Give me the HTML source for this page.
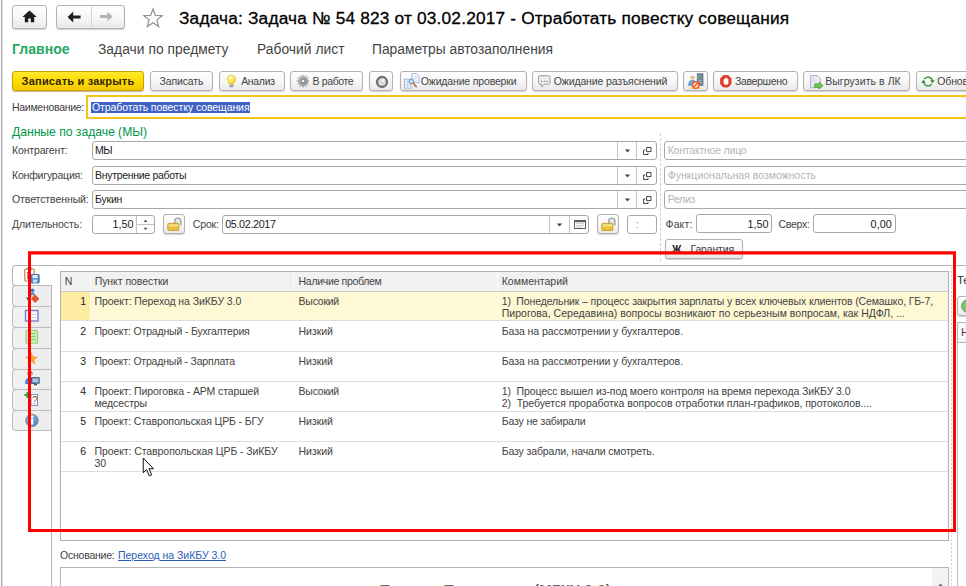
<!DOCTYPE html>
<html><head><meta charset="utf-8">
<style>
html,body{margin:0;padding:0;}
body{width:966px;height:586px;overflow:hidden;background:#fff;position:relative;font-family:"Liberation Sans",sans-serif;font-size:10.5px;line-height:13px;color:#424242;}
.a{position:absolute;white-space:nowrap;}
.t{position:absolute;white-space:pre;}
.btn{position:absolute;box-sizing:border-box;border:1px solid #b2b2b2;border-radius:3px;background:linear-gradient(#ffffff,#f6f6f6 55%,#e9e9e9);box-shadow:0 1px 1px rgba(0,0,0,0.18);}
.inp{position:absolute;box-sizing:border-box;border:1px solid #a8a8a8;border-radius:3px;background:#fff;height:19px;}
.vl{position:absolute;width:1px;background:#c4c4c4;}
.hl{position:absolute;height:1px;background:#e0e0e0;}
</style></head><body>
<div class="vl" style="left:1px;top:0px;height:586px;background:#a8a8a8;"></div>
<div class="vl" style="left:2px;top:0px;height:586px;background:#e4e4e4;"></div>
<div class="btn" style="left:12px;top:5px;width:35px;height:24px;"></div>
<svg class="a" style="left:22px;top:10px;" width="15" height="13" viewBox="0 0 15 13"><path d="M7.5 0.6 L0.3 7 H2.8 V12.2 H6.2 V8.4 H8.8 V12.2 H12.2 V7 H14.7 Z" fill="#1e1e1e"/></svg>
<div class="btn" style="left:56px;top:5px;width:69px;height:24px;"></div>
<div class="vl" style="left:91px;top:6px;height:22px;background:#d4d4d4;"></div>
<svg class="a" style="left:67px;top:11px;" width="15" height="12" viewBox="0 0 15 12"><path d="M6.2 0.6 L0.6 6 L6.2 11.4 V7.5 H13.6 V4.5 H6.2 Z" fill="#1e1e1e"/></svg>
<svg class="a" style="left:99px;top:11px;" width="15" height="11" viewBox="0 0 15 11"><path d="M8.4 0.8 L13.6 5.5 L8.4 10.2 V6.9 H1 V4.1 H8.4 Z" fill="#b4b4b4"/></svg>
<svg class="a" style="left:142px;top:7px;" width="22" height="22" viewBox="0 0 22 22"><path d="M11 2 L13.4 8.4 L20.2 8.7 L14.9 12.9 L16.7 19.5 L11 15.7 L5.3 19.5 L7.1 12.9 L1.8 8.7 L8.6 8.4 Z" fill="#fff" stroke="#909090" stroke-width="1.2"/></svg>
<div class="t" style="left:179px;top:7px;font-size:17.3px;line-height:22px;color:#000;letter-spacing:0.175px;-webkit-text-stroke:0.3px #000;">Задача: Задача № 54 823 от 03.02.2017 - Отработать повестку совещания</div>
<div class="t" style="left:12px;top:41px;font-size:14px;line-height:17px;color:#25a862;font-weight:bold;letter-spacing:0.04px;">Главное</div>
<div class="t" style="left:98px;top:41px;font-size:13.8px;line-height:17px;color:#444;letter-spacing:0.039px;">Задачи по предмету</div>
<div class="t" style="left:257px;top:41px;font-size:13.8px;line-height:17px;color:#444;letter-spacing:0.032px;">Рабочий лист</div>
<div class="t" style="left:372px;top:41px;font-size:13.8px;line-height:17px;color:#444;letter-spacing:0.009px;">Параметры автозаполнения</div>
<div class="btn" style="left:12px;top:71px;width:132px;height:20px;border-color:#c9a300;background:linear-gradient(#ffe92e,#ffdc00 50%,#f3ca00);box-shadow:0 1px 1px rgba(120,90,0,0.45);"></div>
<div class="t" style="left:21.6px;top:75px;font-size:11px;line-height:13px;color:#33260a;font-weight:bold;letter-spacing:0.21px;">Записать и закрыть</div>
<div class="btn" style="left:150px;top:71px;width:63px;height:20px;"></div>
<div class="t" style="left:159.5px;top:75px;font-size:10.5px;line-height:13px;color:#424242;letter-spacing:-0.146px;">Записать</div>
<div class="btn" style="left:219px;top:71px;width:66px;height:20px;"></div>
<div class="t" style="left:241.2px;top:75px;font-size:10.5px;line-height:13px;color:#424242;letter-spacing:-0.325px;">Анализ</div>
<div class="btn" style="left:290px;top:71px;width:73px;height:20px;"></div>
<div class="t" style="left:312.6px;top:75px;font-size:10.5px;line-height:13px;color:#424242;letter-spacing:-0.382px;">В работе</div>
<div class="btn" style="left:369px;top:71px;width:24px;height:20px;"></div>
<div class="btn" style="left:400px;top:71px;width:127px;height:20px;"></div>
<div class="t" style="left:420.8px;top:75px;font-size:10.5px;line-height:13px;color:#424242;letter-spacing:-0.165px;">Ожидание проверки</div>
<div class="btn" style="left:532px;top:71px;width:146px;height:20px;"></div>
<div class="t" style="left:553.8px;top:75px;font-size:10.5px;line-height:13px;color:#424242;letter-spacing:-0.143px;">Ожидание разъяснений</div>
<div class="btn" style="left:683px;top:71px;width:25px;height:20px;"></div>
<div class="btn" style="left:713px;top:71px;width:85px;height:20px;"></div>
<div class="t" style="left:734.9px;top:75px;font-size:10.5px;line-height:13px;color:#424242;letter-spacing:-0.325px;">Завершено</div>
<div class="btn" style="left:803px;top:71px;width:107px;height:20px;"></div>
<div class="t" style="left:825.2px;top:75px;font-size:10.5px;line-height:13px;color:#424242;letter-spacing:0.062px;">Выгрузить в ЛК</div>
<div class="btn" style="left:916px;top:71px;width:80px;height:20px;"></div>
<div class="t" style="left:937.2px;top:75px;font-size:10.5px;line-height:13px;color:#424242;letter-spacing:-0.12px;">Обновить</div>
<svg class="a" style="left:226px;top:74px;" width="11" height="15" viewBox="0 0 11 15"><defs><radialGradient id="gb" cx="0.38" cy="0.3" r="0.75"><stop offset="0" stop-color="#fffbd0"/><stop offset="0.55" stop-color="#ffe85a"/><stop offset="1" stop-color="#f2c81e"/></radialGradient></defs><path d="M5.4 0.9 A4.2 4.2 0 0 1 8 8.4 L7.7 10 H3.1 L2.8 8.4 A4.2 4.2 0 0 1 5.4 0.9 Z" fill="url(#gb)" stroke="#e3bd3a" stroke-width="0.7"/><rect x="3.4" y="10.4" width="4" height="2.8" rx="0.8" fill="#a2a2a2"/></svg>
<svg class="a" style="left:295.5px;top:73.8px;" width="14" height="14" viewBox="0 0 14 14"><defs><linearGradient id="gg" x1="0" y1="0" x2="1" y2="1"><stop offset="0" stop-color="#c6c6c6"/><stop offset="1" stop-color="#868686"/></linearGradient></defs><g transform="translate(7,7)"><polygon points="7.20,0.00 4.25,1.14 6.24,3.60 3.11,3.11 3.60,6.24 1.14,4.25 0.00,7.20 -1.14,4.25 -3.60,6.24 -3.11,3.11 -6.24,3.60 -4.25,1.14 -7.20,0.00 -4.25,-1.14 -6.24,-3.60 -3.11,-3.11 -3.60,-6.24 -1.14,-4.25 -0.00,-7.20 1.14,-4.25 3.60,-6.24 3.11,-3.11 6.24,-3.60 4.25,-1.14" fill="url(#gg)"/><circle r="2.7" fill="#8c8c8c"/><circle r="1.3" fill="#f2f2f2"/></g></svg>
<svg class="a" style="left:374.5px;top:74.5px;" width="14" height="14" viewBox="0 0 14 14"><circle cx="7" cy="7" r="5" fill="#dcdcdc" stroke="#707070" stroke-width="2.3"/><path d="M7 7 L7 3.2 A3.8 3.8 0 0 1 10.3 5.1 Z" fill="#f4f4f4"/></svg>
<svg class="a" style="left:404px;top:73px;" width="16" height="17" viewBox="0 0 16 17"><path d="M7.9 0.6 H12.4 L15 3.2 V9.6 H7.9 Z" fill="#fbfdff" stroke="#8fb0da" stroke-width="0.9"/><path d="M9.6 3.6 H13.4 M9.6 5.6 H13.4 M11.5 7.6 H13.4" stroke="#bcd0ea" stroke-width="0.9"/><rect x="0.5" y="6.2" width="6.4" height="9" fill="#f1f6fc" stroke="#9db6d6" stroke-width="0.9"/><path d="M0.5 9 H6.9 M0.5 12 H6.9 M3.7 6.2 V15.2" stroke="#b4c8e2" stroke-width="0.8"/><circle cx="7.4" cy="8.4" r="2.4" fill="#bcd9f7" stroke="#6f8fba" stroke-width="1"/><path d="M9.2 10.3 L12.2 13.6" stroke="#b5723a" stroke-width="1.7" stroke-linecap="round"/></svg>
<svg class="a" style="left:538px;top:75px;" width="13" height="13" viewBox="0 0 13 13"><path d="M2 0.7 H10.6 A1.4 1.4 0 0 1 12 2.1 V7.8 A1.4 1.4 0 0 1 10.6 9.2 H6.4 L3.6 12 V9.2 H2 A1.4 1.4 0 0 1 0.6 7.8 V2.1 A1.4 1.4 0 0 1 2 0.7 Z" fill="#eeeeee" stroke="#9a9a9a" stroke-width="1"/><path d="M3 6.3 H4.2 M5.7 6.3 H6.9 M8.4 6.3 H9.6" stroke="#808080" stroke-width="1.2"/></svg>
<svg class="a" style="left:688px;top:73px;" width="16" height="17" viewBox="0 0 16 17"><rect x="9.2" y="0.8" width="5.8" height="11.6" fill="#76879e" stroke="#566479" stroke-width="0.7"/><path d="M10.6 2.4 V5.4" stroke="#5fd06a" stroke-width="1.1"/><path d="M10.2 7.5 H14 M10.2 9.5 H14" stroke="#a9b6c9" stroke-width="0.8"/><path d="M1.2 15.2 H13.6" stroke="#e9d28a" stroke-width="1.4"/><path d="M2 5 A2.6 2.6 0 0 1 7 5 Z" fill="#a5602a"/><circle cx="4.5" cy="4.6" r="2" fill="#f2c594"/><path d="M0.6 12.4 C0.6 8.4 2.2 7.2 4.5 7.2 C6.8 7.2 8.4 8.4 8.4 12.4 Z" fill="#6aaee8" stroke="#3f7fc4" stroke-width="0.6"/><circle cx="7.7" cy="12.1" r="3.3" fill="#ffe9a8" stroke="#f0562e" stroke-width="1.4"/><path d="M5.5 14.3 L9.9 9.9" stroke="#f0562e" stroke-width="1.4"/></svg>
<svg class="a" style="left:720px;top:75px;" width="12" height="13" viewBox="0 0 12 13"><path d="M3.4 0.5 H8.2 L11.1 3.6 V9 L8.2 12.1 H3.4 L0.5 9 V3.6 Z" fill="#e63a26" stroke="#c9281a" stroke-width="0.6"/><path d="M3.6 6.4 V4.2 H4.6 V3.2 H5.6 V2.8 H6.6 V3.2 H7.6 V4 H8.4 V8.2 L7.4 9.8 H4.8 L3.6 8.2 Z" fill="#fff"/></svg>
<svg class="a" style="left:810px;top:74.5px;" width="14" height="14" viewBox="0 0 14 14"><path d="M0.6 0.6 H7.4 L10.4 3.6 V12.6 H0.6 Z" fill="#e9edf3" stroke="#9aa8be" stroke-width="0.9"/><path d="M2.2 3 L8.6 9 M2.2 6 H5" stroke="#c9d2e0" stroke-width="0.9"/><path d="M4.6 8.9 H9 V7.2 L13.2 10.6 L9 14 V12.3 H4.6 Z" fill="#6fc84c" stroke="#3f9a2f" stroke-width="0.7"/></svg>
<svg class="a" style="left:921px;top:75px;" width="14" height="13" viewBox="0 0 14 13"><path d="M3.2 4 A4.7 4.7 0 0 1 11.5 5.6" fill="none" stroke="#3d9a3d" stroke-width="1.4"/><path d="M9.2 5.2 H13.8 L11.5 8.2 Z" fill="#2f8a2f"/><path d="M10.8 9 A4.7 4.7 0 0 1 2.5 7.4" fill="none" stroke="#3d9a3d" stroke-width="1.4"/><path d="M0.2 7.8 H4.8 L2.5 4.8 Z" fill="#2f8a2f"/></svg>
<div class="t" style="left:12px;top:101px;font-size:10.5px;line-height:13px;color:#424242;letter-spacing:-0.285px;">Наименование:</div>
<div class="a" style="left:86px;top:95px;width:900px;height:24px;box-sizing:border-box;border:2px solid #f3c31c;background:#fff;"></div>
<div class="a" style="left:91px;top:101.5px;width:159px;height:11.5px;background:#3f60c4;"></div>
<div class="t" style="left:92px;top:101px;font-size:10.5px;line-height:13px;color:#fff;letter-spacing:-0.082px;">Отработать повестку совещания</div>
<div class="t" style="left:12px;top:124.5px;font-size:12.2px;line-height:15px;color:#00964a;letter-spacing:-0.033px;">Данные по задаче (МЫ)</div>
<div class="t" style="left:12px;top:144px;font-size:10.5px;line-height:13px;color:#424242;letter-spacing:-0.146px;">Контрагент:</div>
<div class="inp" style="left:92px;top:141px;width:565px;height:19px;"></div>
<div class="t" style="left:95px;top:144px;font-size:10.5px;line-height:13px;color:#222;letter-spacing:-0.621px;">МЫ</div>
<div class="vl" style="left:617px;top:142px;height:17px;background:#c4c4c4;"></div>
<div class="vl" style="left:636px;top:142px;height:17px;background:#c4c4c4;"></div>
<svg class="a" style="left:624px;top:149px;" width="7" height="4" viewBox="0 0 7 4"><path d="M0.9 0.4 H6.1 L3.5 3.4 Z" fill="#444"/></svg>
<svg class="a" style="left:642px;top:145px;" width="11" height="11" viewBox="0 0 11 11"><path d="M4.6 2.5 H9 V6.6 H4.6 Z M3.2 5 H1.6 V9.5 H6 V8" fill="none" stroke="#444" stroke-width="1"/></svg>
<div class="t" style="left:12px;top:169px;font-size:10.5px;line-height:13px;color:#424242;letter-spacing:-0.199px;">Конфигурация:</div>
<div class="inp" style="left:92px;top:166px;width:565px;height:19px;"></div>
<div class="t" style="left:95px;top:169px;font-size:10.5px;line-height:13px;color:#222;letter-spacing:-0.301px;">Внутренние работы</div>
<div class="vl" style="left:617px;top:167px;height:17px;background:#c4c4c4;"></div>
<div class="vl" style="left:636px;top:167px;height:17px;background:#c4c4c4;"></div>
<svg class="a" style="left:624px;top:174px;" width="7" height="4" viewBox="0 0 7 4"><path d="M0.9 0.4 H6.1 L3.5 3.4 Z" fill="#444"/></svg>
<svg class="a" style="left:642px;top:170px;" width="11" height="11" viewBox="0 0 11 11"><path d="M4.6 2.5 H9 V6.6 H4.6 Z M3.2 5 H1.6 V9.5 H6 V8" fill="none" stroke="#444" stroke-width="1"/></svg>
<div class="t" style="left:12px;top:193px;font-size:10.5px;line-height:13px;color:#424242;letter-spacing:-0.086px;">Ответственный:</div>
<div class="inp" style="left:92px;top:190px;width:565px;height:19px;"></div>
<div class="t" style="left:95px;top:193px;font-size:10.5px;line-height:13px;color:#222;letter-spacing:-0.194px;">Букин</div>
<div class="vl" style="left:617px;top:191px;height:17px;background:#c4c4c4;"></div>
<div class="vl" style="left:636px;top:191px;height:17px;background:#c4c4c4;"></div>
<svg class="a" style="left:624px;top:198px;" width="7" height="4" viewBox="0 0 7 4"><path d="M0.9 0.4 H6.1 L3.5 3.4 Z" fill="#444"/></svg>
<svg class="a" style="left:642px;top:194px;" width="11" height="11" viewBox="0 0 11 11"><path d="M4.6 2.5 H9 V6.6 H4.6 Z M3.2 5 H1.6 V9.5 H6 V8" fill="none" stroke="#444" stroke-width="1"/></svg>
<div class="t" style="left:12px;top:218px;font-size:10.5px;line-height:13px;color:#424242;letter-spacing:-0.075px;">Длительность:</div>
<div class="inp" style="left:92px;top:215px;width:63px;height:19px;"></div>
<div class="t" style="left:112.5px;top:218px;font-size:10.8px;line-height:13px;color:#222;letter-spacing:0.02px;">1,50</div>
<div class="vl" style="left:136px;top:216px;height:17px;background:#c4c4c4;"></div>
<div class="hl" style="left:137px;top:224px;width:17px;background:#c4c4c4;"></div>
<svg class="a" style="left:142px;top:219px;" width="7" height="4" viewBox="0 0 7 4"><path d="M3.5 0.8 L5.4 2.9 H1.6 Z" fill="#444"/></svg>
<svg class="a" style="left:142px;top:227px;" width="7" height="4" viewBox="0 0 7 4"><path d="M1.6 0.8 H5.4 L3.5 2.9 Z" fill="#444"/></svg>
<div class="btn" style="left:163px;top:214px;width:22px;height:20px;"></div>
<svg class="a" style="left:166px;top:216px;" width="17" height="16" viewBox="0 0 17 16"><path d="M8.8 8 V5.2 A3 3 0 0 1 14.8 5.2 V9.6" fill="none" stroke="#a4a4a4" stroke-width="1.5"/><path d="M10.6 8 V5.6 A1.3 1.3 0 0 1 13.1 5.6 V8" fill="none" stroke="#d0d0d0" stroke-width="0.9"/><rect x="1.8" y="7.4" width="11" height="7" rx="0.8" fill="#e6c23c" stroke="#c29a22" stroke-width="0.9"/><rect x="2.6" y="8.2" width="9.4" height="2.4" fill="#f3dc80"/></svg>
<div class="t" style="left:192.8px;top:218px;font-size:10.5px;line-height:13px;color:#424242;letter-spacing:-0.155px;">Срок:</div>
<div class="inp" style="left:222px;top:215px;width:367px;height:19px;"></div>
<div class="t" style="left:225.2px;top:218px;font-size:10.8px;line-height:13px;color:#222;letter-spacing:-0.365px;">05.02.2017</div>
<div class="vl" style="left:549px;top:216px;height:17px;background:#c4c4c4;"></div>
<div class="vl" style="left:569px;top:216px;height:17px;background:#c4c4c4;"></div>
<svg class="a" style="left:556px;top:223px;" width="7" height="4" viewBox="0 0 7 4"><path d="M0.9 0.4 H6.1 L3.5 3.4 Z" fill="#444"/></svg>
<svg class="a" style="left:574px;top:220px;" width="12" height="9" viewBox="0 0 12 9"><rect x="0.5" y="0.5" width="11" height="8" fill="#fff" stroke="#5c5c5c"/><rect x="1" y="1" width="10" height="1.2" fill="#5c5c5c"/><path d="M2.5 3.7 H3.5 M4.5 3.7 H5.5 M6.5 3.7 H7.5 M8.5 3.7 H9.5 M2.5 5.5 H3.5 M4.5 5.5 H5.5 M6.5 5.5 H7.5 M8.5 5.5 H9.5 M2.5 7.2 H3.5 M4.5 7.2 H5.5 M6.5 7.2 H7.5" stroke="#8c8c8c" stroke-width="0.9"/></svg>
<div class="btn" style="left:597px;top:214px;width:22px;height:20px;"></div>
<svg class="a" style="left:600px;top:216px;" width="17" height="16" viewBox="0 0 17 16"><path d="M8.8 8 V5.2 A3 3 0 0 1 14.8 5.2 V9.6" fill="none" stroke="#a4a4a4" stroke-width="1.5"/><path d="M10.6 8 V5.6 A1.3 1.3 0 0 1 13.1 5.6 V8" fill="none" stroke="#d0d0d0" stroke-width="0.9"/><rect x="1.8" y="7.4" width="11" height="7" rx="0.8" fill="#e6c23c" stroke="#c29a22" stroke-width="0.9"/><rect x="2.6" y="8.2" width="9.4" height="2.4" fill="#f3dc80"/></svg>
<div class="inp" style="left:627px;top:215px;width:30px;height:19px;"></div>
<div class="t" style="left:636px;top:218px;font-size:10.5px;line-height:13px;color:#b070b0;">:</div>
<div class="a" style="left:660px;top:133px;width:1px;height:129px;background:repeating-linear-gradient(180deg,#cfcfcf 0 3px,#fff 3px 5px);"></div>
<div class="inp" style="left:664px;top:141px;width:320px;height:19px;"></div>
<div class="t" style="left:667.7px;top:144px;font-size:10.5px;line-height:13px;color:#b4b4b4;letter-spacing:-0.209px;">Контактное лицо</div>
<div class="inp" style="left:664px;top:166px;width:320px;height:19px;"></div>
<div class="t" style="left:667.7px;top:169px;font-size:10.5px;line-height:13px;color:#b4b4b4;letter-spacing:0.013px;">Функциональная возможность</div>
<div class="inp" style="left:664px;top:190px;width:320px;height:19px;"></div>
<div class="t" style="left:667.7px;top:193px;font-size:10.5px;line-height:13px;color:#b4b4b4;letter-spacing:-0.308px;">Релиз</div>
<div class="t" style="left:665.5px;top:218px;font-size:10.5px;line-height:13px;color:#424242;letter-spacing:0.148px;">Факт:</div>
<div class="inp" style="left:696px;top:214px;width:76px;height:19px;"></div>
<div class="t" style="left:747.5px;top:217.5px;font-size:10.8px;line-height:13px;color:#222;letter-spacing:0.02px;">1,50</div>
<div class="t" style="left:778.6px;top:218px;font-size:10.5px;line-height:13px;color:#424242;letter-spacing:-0.312px;">Сверх:</div>
<div class="inp" style="left:813px;top:214px;width:83px;height:19px;"></div>
<div class="t" style="left:870.6px;top:217.5px;font-size:10.8px;line-height:13px;color:#222;letter-spacing:0.045px;">0,00</div>
<div class="btn" style="left:665px;top:239px;width:78px;height:20px;"></div>
<div class="t" style="left:672px;top:243px;font-size:10.5px;line-height:13px;color:#222;font-weight:bold;letter-spacing:0.51px;">Ж</div>
<div class="t" style="left:690.5px;top:243px;font-size:10.5px;line-height:13px;color:#424242;letter-spacing:-0.159px;">Гарантия</div>
<div class="hl" style="left:52px;top:265px;width:920px;background:#b4b4b4;"></div>
<div class="vl" style="left:51px;top:285px;height:330px;background:#b4b4b4;"></div>
<div class="a" style="left:12px;top:265px;width:40px;height:21px;box-sizing:border-box;border:1px solid #b4b4b4;border-right:none;border-radius:4px 0 0 4px;background:#fff;"></div>
<div class="a" style="left:12px;top:285px;width:40px;height:22px;box-sizing:border-box;border:1px solid #bcbcbc;border-right:1px solid #b4b4b4;border-radius:4px 0 0 4px;background:linear-gradient(90deg,#f1f1f1,#ececec);"></div>
<div class="a" style="left:12px;top:306px;width:40px;height:22px;box-sizing:border-box;border:1px solid #bcbcbc;border-right:1px solid #b4b4b4;border-radius:4px 0 0 4px;background:linear-gradient(90deg,#f1f1f1,#ececec);"></div>
<div class="a" style="left:12px;top:327px;width:40px;height:22px;box-sizing:border-box;border:1px solid #bcbcbc;border-right:1px solid #b4b4b4;border-radius:4px 0 0 4px;background:linear-gradient(90deg,#f1f1f1,#ececec);"></div>
<div class="a" style="left:12px;top:348px;width:40px;height:21.5px;box-sizing:border-box;border:1px solid #bcbcbc;border-right:1px solid #b4b4b4;border-radius:4px 0 0 4px;background:linear-gradient(90deg,#f1f1f1,#ececec);"></div>
<div class="a" style="left:12px;top:368.5px;width:40px;height:21.5px;box-sizing:border-box;border:1px solid #bcbcbc;border-right:1px solid #b4b4b4;border-radius:4px 0 0 4px;background:linear-gradient(90deg,#f1f1f1,#ececec);"></div>
<div class="a" style="left:12px;top:389px;width:40px;height:21.5px;box-sizing:border-box;border:1px solid #bcbcbc;border-right:1px solid #b4b4b4;border-radius:4px 0 0 4px;background:linear-gradient(90deg,#f1f1f1,#ececec);"></div>
<div class="a" style="left:12px;top:409.5px;width:40px;height:21.5px;box-sizing:border-box;border:1px solid #bcbcbc;border-right:1px solid #b4b4b4;border-radius:4px 0 0 4px;background:linear-gradient(90deg,#f1f1f1,#ececec);"></div>
<svg class="a" style="left:24px;top:267px;" width="16" height="17" viewBox="0 0 16 17"><rect x="0.8" y="2" width="9.4" height="12" rx="1" fill="#fff" stroke="#b98a50" stroke-width="1.2"/><rect x="3.2" y="0.6" width="4.6" height="2.6" rx="0.8" fill="#d8b27a" stroke="#9a7038" stroke-width="0.6"/><path d="M3 6 H4.6 M3 8.5 H4.6 M3 11 H4.6" stroke="#d22" stroke-width="1.3"/><rect x="7" y="7.5" width="8.2" height="8.5" rx="0.8" fill="#4f8fd6" stroke="#2c5f9e" stroke-width="0.8"/><rect x="8.6" y="8" width="5" height="3.2" fill="#e8f1fb"/><rect x="9" y="12.6" width="4.2" height="3" fill="#cfe0f5"/></svg>
<svg class="a" style="left:24px;top:288px;" width="16" height="17" viewBox="0 0 16 17"><circle cx="8.4" cy="2.6" r="2" fill="#3d7fd0"/><path d="M5.6 9 C5.6 5.6 6.8 4.8 8.4 4.8 C10 4.8 11.2 5.6 11.2 9 Z" fill="#3d7fd0"/><circle cx="8.6" cy="8" r="1.6" fill="#f0c9a0"/><path d="M2 9.6 H7 L4.5 13.6 Z" fill="#2c5f9e"/><path d="M11.2 7 L15 10.8 L11.2 14.6 L7.4 10.8 Z" fill="#e8502c" stroke="#c0391c" stroke-width="0.5"/></svg>
<svg class="a" style="left:24px;top:309px;" width="16" height="14" viewBox="0 0 16 14"><rect x="1.5" y="1.5" width="12.5" height="10.5" fill="#f4f6ff" stroke="#6a78c8" stroke-width="1.3"/><path d="M8.5 5.5 H12 M8.5 8.5 H12" stroke="#b8b8c4" stroke-width="1.1" stroke-dasharray="1.2 0.8"/><path d="M3.5 5.5 H6.5 M3.5 8.5 H6.5" stroke="#c9cbe0" stroke-width="1.1"/></svg>
<svg class="a" style="left:25px;top:329px;" width="14" height="16" viewBox="0 0 14 16"><rect x="1" y="1.2" width="11.5" height="13" rx="0.8" fill="#c9f0b4" stroke="#93cf7c" stroke-width="1.1"/><path d="M5.8 4.5 H10.5 M5.8 7.5 H10.5 M5.8 10.5 H10.5" stroke="#86c86c" stroke-width="1.1"/></svg>
<svg class="a" style="left:25px;top:351.5px;" width="13" height="13" viewBox="0 0 16 16"><path d="M8 0.8 L9.9 5.9 L15.3 6.1 L11 9.5 L12.5 14.8 L8 11.7 L3.5 14.8 L5 9.5 L0.7 6.1 L6.1 5.9 Z" fill="#ffa630" stroke="#f08c14" stroke-width="0.5"/></svg>
<svg class="a" style="left:24px;top:370px;" width="16" height="17" viewBox="0 0 16 17"><circle cx="6" cy="3.6" r="2.6" fill="#b0622c"/><circle cx="6" cy="4.4" r="1.9" fill="#f0c9a0"/><path d="M1 14 C1 8.6 3 7.4 6 7.4 C9 7.4 11 8.6 11 14 Z" fill="#3d8ee0"/><rect x="7.6" y="7.6" width="7.6" height="5.6" fill="#6f8fb8" stroke="#3c4f6e" stroke-width="0.8"/><rect x="8.6" y="8.6" width="5.6" height="3.6" fill="#a9c4e6"/><path d="M10 14.6 H13 M11.5 13.2 V14.6" stroke="#3c4f6e" stroke-width="1.1"/></svg>
<svg class="a" style="left:24px;top:391px;" width="16" height="17" viewBox="0 0 16 17"><rect x="7" y="3.6" width="6.6" height="10.8" fill="#fff" stroke="#6a86bc" stroke-width="0.9"/><path d="M0.4 4 H6.4 M3.4 1 V7" stroke="#2ea32e" stroke-width="1.9"/></svg>
<div class="t" style="left:32px;top:394.3px;font-size:10px;line-height:13px;color:#8a5a2a;">?</div>
<svg class="a" style="left:24px;top:411.5px;" width="16" height="17" viewBox="0 0 16 17"><defs><radialGradient id="gi" cx="0.4" cy="0.3" r="0.8"><stop offset="0" stop-color="#8fc2f0"/><stop offset="1" stop-color="#2f74c0"/></radialGradient></defs><circle cx="8" cy="8.5" r="6.3" fill="url(#gi)" stroke="#9a9a9a" stroke-width="1.1"/><rect x="6.9" y="7" width="2.4" height="5.6" fill="#fff"/><circle cx="8.1" cy="4.8" r="1.4" fill="#fff"/></svg>
<div class="a" style="left:60px;top:271px;width:889px;height:270px;box-sizing:border-box;border:1px solid #b0b0b0;background:#fff;"></div>
<div class="a" style="left:61px;top:272px;width:887px;height:19px;background:#f1f1f1;"></div>
<div class="hl" style="left:61px;top:291px;width:887px;background:#c9c9c9;"></div>
<div class="vl" style="left:90px;top:272px;height:19px;background:#fbfbfb;"></div>
<div class="vl" style="left:293px;top:272px;height:19px;background:#fbfbfb;"></div>
<div class="vl" style="left:497px;top:272px;height:19px;background:#fbfbfb;"></div>
<div class="t" style="left:64.8px;top:275px;font-size:10.5px;line-height:13px;color:#444;letter-spacing:-0.12px;">N</div>
<div class="t" style="left:94.7px;top:275px;font-size:10.5px;line-height:13px;color:#444;letter-spacing:-0.056px;">Пункт повестки</div>
<div class="t" style="left:298.6px;top:275px;font-size:10.5px;line-height:13px;color:#444;letter-spacing:-0.313px;">Наличие проблем</div>
<div class="t" style="left:501.7px;top:275px;font-size:10.5px;line-height:13px;color:#444;letter-spacing:0.015px;">Комментарий</div>
<div class="a" style="left:61px;top:292px;width:29px;height:28px;background:#fdeca2;"></div>
<div class="a" style="left:91px;top:292px;width:857px;height:28px;background:#fff8d4;"></div>
<div class="vl" style="left:293px;top:292px;height:28px;background:#fffbe6;"></div>
<div class="vl" style="left:497px;top:292px;height:28px;background:#fffbe6;"></div>
<div class="hl" style="left:61px;top:320px;width:887px;background:#dedede;"></div>
<div class="hl" style="left:61px;top:351px;width:887px;background:#dedede;"></div>
<div class="hl" style="left:61px;top:381px;width:887px;background:#dedede;"></div>
<div class="hl" style="left:61px;top:411px;width:887px;background:#dedede;"></div>
<div class="hl" style="left:61px;top:441px;width:887px;background:#dedede;"></div>
<div class="hl" style="left:61px;top:471px;width:887px;background:#dedede;"></div>
<div class="t" style="left:80.28px;top:294.5px;font-size:10.5px;line-height:13px;color:#222;letter-spacing:-0.12px;">1</div>
<div class="t" style="left:94.5px;top:294.5px;font-size:10.5px;line-height:13px;color:#424242;letter-spacing:-0.073px;">Проект: Переход на ЗиКБУ 3.0</div>
<div class="t" style="left:298.6px;top:294.5px;font-size:10.5px;line-height:13px;color:#424242;letter-spacing:-0.24px;">Высокий</div>
<div class="t" style="left:501.7px;top:294.5px;font-size:10.5px;line-height:13px;color:#424242;letter-spacing:-0.121px;">1)  Понедельник – процесс закрытия зарплаты у всех ключевых клиентов (Семашко, ГБ-7,</div>
<div class="t" style="left:501.7px;top:306.7px;font-size:10.5px;line-height:13px;color:#424242;letter-spacing:0.025px;">Пирогова, Середавина) вопросы возникают по серьезным вопросам, как НДФЛ, ...</div>
<div class="t" style="left:80.28px;top:325px;font-size:10.5px;line-height:13px;color:#222;letter-spacing:-0.12px;">2</div>
<div class="t" style="left:94.5px;top:325.0px;font-size:10.5px;line-height:13px;color:#424242;letter-spacing:-0.176px;">Проект: Отрадный - Бухгалтерия</div>
<div class="t" style="left:298.6px;top:325px;font-size:10.5px;line-height:13px;color:#424242;letter-spacing:-0.064px;">Низкий</div>
<div class="t" style="left:501.7px;top:325.0px;font-size:10.5px;line-height:13px;color:#424242;letter-spacing:-0.06px;">База на рассмотрении у бухгалтеров.</div>
<div class="t" style="left:80.28px;top:355px;font-size:10.5px;line-height:13px;color:#222;letter-spacing:-0.12px;">3</div>
<div class="t" style="left:94.5px;top:355.0px;font-size:10.5px;line-height:13px;color:#424242;letter-spacing:-0.193px;">Проект: Отрадный - Зарплата</div>
<div class="t" style="left:298.6px;top:355px;font-size:10.5px;line-height:13px;color:#424242;letter-spacing:-0.064px;">Низкий</div>
<div class="t" style="left:501.7px;top:355.0px;font-size:10.5px;line-height:13px;color:#424242;letter-spacing:-0.06px;">База на рассмотрении у бухгалтеров.</div>
<div class="t" style="left:80.28px;top:385px;font-size:10.5px;line-height:13px;color:#222;letter-spacing:-0.12px;">4</div>
<div class="t" style="left:94.5px;top:385.0px;font-size:10.5px;line-height:13px;color:#424242;letter-spacing:-0.107px;">Проект: Пироговка - АРМ старшей</div>
<div class="t" style="left:94.5px;top:397.2px;font-size:10.5px;line-height:13px;color:#424242;letter-spacing:-0.11px;">медсестры</div>
<div class="t" style="left:298.6px;top:385px;font-size:10.5px;line-height:13px;color:#424242;letter-spacing:-0.24px;">Высокий</div>
<div class="t" style="left:501.7px;top:385.0px;font-size:10.5px;line-height:13px;color:#424242;letter-spacing:-0.08px;">1)  Процесс вышел из-под моего контроля на время перехода ЗиКБУ 3.0</div>
<div class="t" style="left:501.7px;top:397.2px;font-size:10.5px;line-height:13px;color:#424242;letter-spacing:-0.038px;">2)  Требуется проработка вопросов отработки план-графиков, протоколов....</div>
<div class="t" style="left:80.28px;top:415px;font-size:10.5px;line-height:13px;color:#222;letter-spacing:-0.12px;">5</div>
<div class="t" style="left:94.5px;top:415.0px;font-size:10.5px;line-height:13px;color:#424242;letter-spacing:-0.139px;">Проект: Ставропольская ЦРБ - БГУ</div>
<div class="t" style="left:298.6px;top:415px;font-size:10.5px;line-height:13px;color:#424242;letter-spacing:-0.064px;">Низкий</div>
<div class="t" style="left:501.7px;top:415.0px;font-size:10.5px;line-height:13px;color:#424242;letter-spacing:-0.152px;">Базу не забирали</div>
<div class="t" style="left:80.28px;top:445px;font-size:10.5px;line-height:13px;color:#222;letter-spacing:-0.12px;">6</div>
<div class="t" style="left:94.5px;top:445.0px;font-size:10.5px;line-height:13px;color:#424242;letter-spacing:-0.083px;">Проект: Ставропольская ЦРБ - ЗиКБУ</div>
<div class="t" style="left:94.5px;top:457.2px;font-size:10.5px;line-height:13px;color:#424242;letter-spacing:-0.09px;">30</div>
<div class="t" style="left:298.6px;top:445px;font-size:10.5px;line-height:13px;color:#424242;letter-spacing:-0.064px;">Низкий</div>
<div class="t" style="left:501.7px;top:445.0px;font-size:10.5px;line-height:13px;color:#424242;letter-spacing:-0.13px;">Базу забрали, начали смотреть.</div>
<div class="t" style="left:957px;top:274px;font-size:11.5px;line-height:13px;color:#333;letter-spacing:-0.12px;">Те</div>
<div class="btn" style="left:957px;top:296px;width:30px;height:20px;"></div>
<svg class="a" style="left:961px;top:299px;" width="14" height="14" viewBox="0 0 14 14"><circle cx="7" cy="7" r="6.3" fill="#7cc576" stroke="#4f9e4a"/></svg>
<div class="a" style="left:957px;top:322px;width:30px;height:21px;box-sizing:border-box;border:1px solid #b4b4b4;background:#f8f8f8;"></div>
<div class="t" style="left:961px;top:326px;font-size:11px;line-height:13px;color:#444;letter-spacing:-0.12px;">Н</div>
<div class="vl" style="left:957px;top:343px;height:250px;background:#bdbdbd;"></div>
<div class="a" style="left:951px;top:267px;width:1px;height:330px;background:repeating-linear-gradient(180deg,#cccccc 0 2px,#fff 2px 4px);"></div>
<div class="t" style="left:60px;top:549px;font-size:10.5px;line-height:13px;color:#424242;letter-spacing:-0.228px;">Основание:</div>
<div class="t" style="left:118px;top:549px;font-size:10.5px;line-height:13px;color:#2a5bb8;letter-spacing:-0.017px;text-decoration:underline;">Переход на ЗиКБУ 3.0</div>
<div class="a" style="left:60px;top:567px;width:889px;height:40px;box-sizing:border-box;border:1px solid #b4b4b4;background:#fff;"></div>
<div class="a" style="left:932px;top:568px;width:16px;height:30px;background:#f3f3f3;"></div>
<svg class="a" style="left:936px;top:582px;" width="9" height="6" viewBox="0 0 9 6"><path d="M0.5 5.5 L4.5 1.5 L8.5 5.5 Z" fill="#777"/></svg>
<div class="t" style="left:379.5px;top:581.3px;font-size:15px;line-height:17px;color:#666;font-weight:bold;letter-spacing:-0.12px;">Пункты</div>
<div class="t" style="left:443.5px;top:581.3px;font-size:15px;line-height:17px;color:#666;font-weight:bold;letter-spacing:-0.12px;">Повестки</div>
<div class="t" style="left:534px;top:581.3px;font-size:15px;line-height:17px;color:#666;font-weight:bold;letter-spacing:0.213px;">(МГКУ 3.0)</div>
<svg class="a" style="left:28px;top:251px;" width="928" height="281" viewBox="0 0 928 281"><path d="M0 0.2 H928 V281 H0 Z M3 3.6 V278 H925 V3.6 Z" fill="#fe0000" fill-rule="evenodd"/></svg>
<svg class="a" style="left:141.7px;top:456.8px;" width="13" height="21" viewBox="0 0 12 20"><path d="M1 1 L1 15 L4.2 12 L6.8 18 L9 17 L6.5 11.2 L10.8 11.2 Z" fill="#fff" stroke="#111" stroke-width="0.95"/></svg>
</body></html>
